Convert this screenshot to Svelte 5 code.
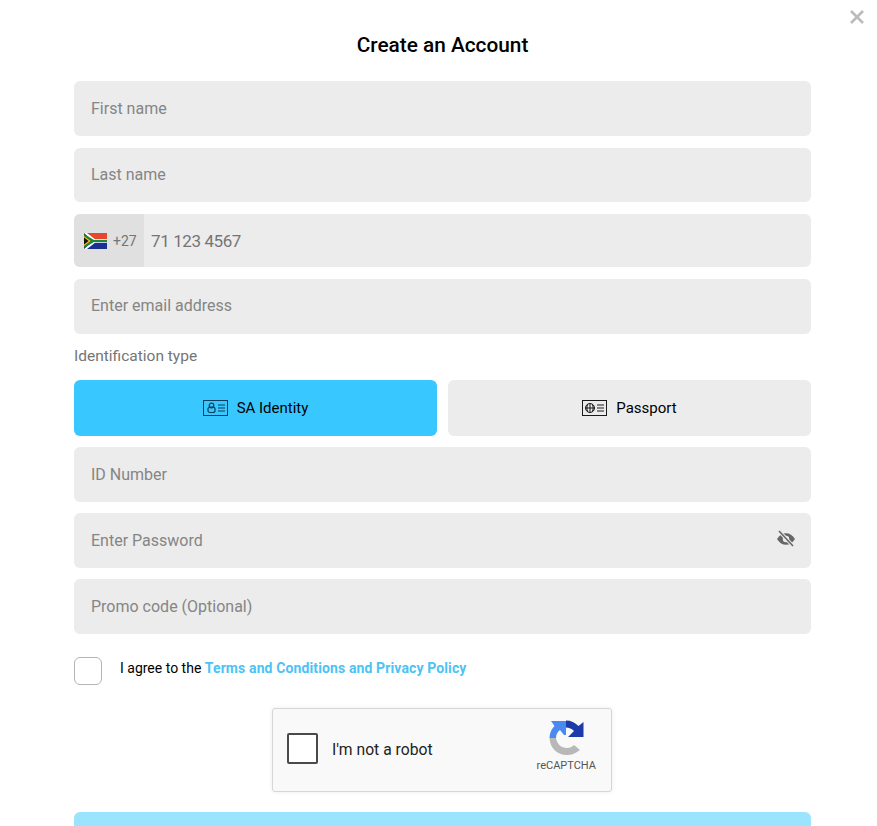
<script>
  const idTypes = ["SA Identity", "Passport"];
  let idType = $state("SA Identity");
  let agreed = $state(false);
</script>

<div class="modal">
  <button class="close" aria-label="Close">
    <svg width="14" height="14" viewBox="0 0 14 14"><path d="M1 1 13 13M13 1 1 13" stroke="#bbb" stroke-width="2.6" /></svg>
  </button>

  <h1>Create an Account</h1>

  <form class="form">
    <div class="contact">
      <input class="field" placeholder="First name" />
      <input class="field short" placeholder="Last name" />

      <div class="phone">
        <div class="prefix">
          <svg width="23" height="16" viewBox="0 0 23 16">
            <rect width="23" height="8" fill="#e2492f" />
            <rect y="8" width="23" height="8" fill="#1a2f8f" />
            <path d="M0 0 9 8 0 16Z" fill="#111" />
            <path d="M0 0H3L11 6.2H23V9.8H11L3 16H0L9 8Z" fill="#fff" />
            <path d="M0 1 10 7H23V9H10L0 15V13L7 8 0 3Z" fill="#138a3d" />
            <path d="M0 3 7 8 0 13Z" fill="#f5b81c" />
            <path d="M0 4.6 4.6 8 0 11.4Z" fill="#111" />
          </svg>
          <span>+27</span>
        </div>
        <input class="number" value="71 123 4567" />
      </div>

      <input class="field email" placeholder="Enter email address" />
    </div>

    <div class="id-type">
      <span class="label">Identification type</span>
      <div class="choices">
        {#each idTypes as type}
          <button type="button" class="choice" class:active={idType === type} onclick={() => (idType = type)}>
            <svg width="25" height="18" viewBox="0 0 25 18" fill="none" stroke="currentColor" stroke-width="1">
              <rect x="0.5" y="1.5" width="24" height="15" />
              {#if type === "Passport"}
                <circle cx="8" cy="9" r="4.5" />
                <path d="M3.5 9H12.5M8 4.5V13.5M5.8 5.2C4.5 7.5 4.5 10.5 5.8 12.8M10.2 5.2C11.5 7.5 11.5 10.5 10.2 12.8" />
              {:else}
                <rect x="5" y="8" width="7" height="5.5" rx="2" stroke-width="1.2" />
                <circle cx="8.5" cy="6.5" r="2.3" stroke-width="1.2" />
              {/if}
              <path d="M15 6H22M15 9H22M15 12H22" stroke-width="1.2" />
            </svg>
            <span>{type}</span>
          </button>
        {/each}
      </div>
    </div>

    <input class="field" placeholder="ID Number" />

    <div class="password">
      <input class="field" type="password" placeholder="Enter Password" />
      <svg class="eye" width="20" height="18" viewBox="0 0 20 18" fill="none">
        <path d="M1 9C3.5 5 6.5 3.2 10 3.2S16.5 5 19 9C16.5 13 13.5 14.8 10 14.8S3.5 13 1 9Z" fill="#666" />
        <circle cx="10" cy="9" r="3.2" fill="#ececec" />
        <path d="M3 1 17 16" stroke="#ececec" stroke-width="3.5" />
        <path d="M3 1 17 16" stroke="#666" stroke-width="1.6" />
      </svg>
    </div>

    <input class="field" placeholder="Promo code (Optional)" />

    <label class="terms">
      <input type="checkbox" bind:checked={agreed} />
      <span>I agree to the <a href="#terms">Terms and Conditions and Privacy Policy</a></span>
    </label>

    <div class="captcha">
      <span class="box"></span>
      <span class="robot">I'm not a robot</span>
      <div class="brand">
        <svg width="35" height="35" viewBox="0 0 35 35">
          <path d="M0.5 18H7C8 24 12 28 18 28C21 28 23 27 25 25L31 30C27 33 23 35 18 35C8 35 1 28 0.5 18Z" fill="#b8b8b8" />
          <path d="M0.5 18C0.5 13 2.5 9 5.5 6L2 1H17V15H15L11 10C8.5 12 7 14.5 7 18Z" fill="#4a8af0" />
          <path d="M17 0.5C22 0.5 26 2.5 29.5 6L34.5 2V17H19L25 11C23 9 20 7.5 17 7.5Z" fill="#1c3aa9" />
        </svg>
        <span>reCAPTCHA</span>
      </div>
    </div>

    <button type="button" class="submit" aria-label="Submit" disabled></button>
  </form>
</div>

<style>
  :global(body) {
    margin: 0;
    background: #fff;
    overflow: hidden;
  }

  .modal {
    position: relative;
    height: 826px;
    overflow: hidden;
    padding: 0 66px 0 74px;
    box-sizing: border-box;
    font-family: Roboto, "Liberation Sans", sans-serif;
  }

  .close {
    position: absolute;
    top: 10px;
    right: 13px;
    padding: 0;
    border: 0;
    background: none;
    line-height: 0;
  }

  h1 {
    margin: 0;
    padding-top: 32px;
    height: 49px;
    font-size: 20.8px;
    line-height: 27px;
    font-weight: 500;
    color: #000;
    text-align: center;
  }

  .form {
    display: flex;
    flex-direction: column;
    gap: 11px;
  }

  .contact {
    display: flex;
    flex-direction: column;
    gap: 12px;
  }

  .field {
    display: block;
    width: 100%;
    height: 55px;
    box-sizing: border-box;
    padding: 0 17px;
    border: 0;
    border-radius: 6px;
    background: #ececec;
    font: 400 16px Roboto, sans-serif;
    color: #757575;
  }

  .field.short {
    height: 54px;
    padding-bottom: 2px;
  }

  .field.email {
    padding-bottom: 2px;
  }

  .field::placeholder {
    color: #858585;
    opacity: 1;
  }

  .phone {
    display: flex;
    height: 53px;
    border-radius: 6px;
    overflow: hidden;
    background: #ececec;
  }

  .prefix {
    display: flex;
    align-items: center;
    gap: 6px;
    width: 70px;
    box-sizing: border-box;
    padding-left: 10px;
    background: #e0e0e0;
    font-size: 14px;
    color: #757575;
  }

  .number {
    flex: 1;
    padding: 0 7px;
    border: 0;
    background: none;
    font: 400 17px Roboto, sans-serif;
    letter-spacing: -0.4px;
    color: #757575;
  }

  .id-type {
    display: flex;
    flex-direction: column;
    gap: 15px;
    padding-top: 2px;
  }

  .label {
    font-size: 15.5px;
    line-height: 18px;
    color: #757575;
  }

  .choices {
    display: grid;
    grid-template-columns: 1fr 1fr;
    gap: 11px;
  }

  .choice {
    display: flex;
    align-items: center;
    justify-content: center;
    gap: 9px;
    height: 56px;
    border: 0;
    border-radius: 6px;
    background: #ececec;
    color: #1a1a1a;
  }

  .choice span {
    font: 400 15px Roboto, sans-serif;
    color: #000;
  }

  .choice.active {
    background: #38c8ff;
    color: #0b3f5c;
  }

  .password {
    position: relative;
  }

  .eye {
    position: absolute;
    top: 17px;
    right: 15px;
  }

  .terms {
    display: flex;
    align-items: center;
    gap: 18px;
    margin-top: 12px;
    font-size: 14px;
    color: #000;
  }

  .terms input {
    appearance: none;
    width: 28px;
    height: 28px;
    margin: 0;
    border: 1px solid #b5b5b5;
    border-radius: 6px;
    background: #fff;
  }

  .terms span {
    margin-top: -6px;
  }

  .terms a {
    color: #4cc3f5;
    font-weight: 700;
    text-decoration: none;
    letter-spacing: 0.12px;
  }

  .captcha {
    display: flex;
    align-items: center;
    align-self: flex-start;
    width: 340px;
    height: 84px;
    margin: 12px 0 0 198px;
    box-sizing: border-box;
    padding: 0 14px;
    border: 1px solid #d6d6d6;
    border-radius: 3px;
    background: #f9f9f9;
    box-shadow: 0 0 4px rgba(0, 0, 0, 0.08);
  }

  .box {
    width: 31px;
    height: 31px;
    margin-top: -3px;
    box-sizing: border-box;
    border: 2px solid #4a4a4a;
    border-radius: 2px;
    background: #fff;
  }

  .robot {
    flex: 1;
    margin-left: 14px;
    margin-top: -2px;
    font-size: 15.7px;
    color: #222;
  }

  .brand {
    display: flex;
    flex-direction: column;
    align-items: center;
    gap: 4px;
    margin-top: -8px;
    margin-right: 1px;
    font-size: 11px;
    line-height: 13px;
    color: #555;
  }

  .submit {
    flex: none;
    height: 55px;
    margin-top: 9px;
    border: 0;
    border-radius: 6px;
    background: #9be4ff;
  }
</style>
